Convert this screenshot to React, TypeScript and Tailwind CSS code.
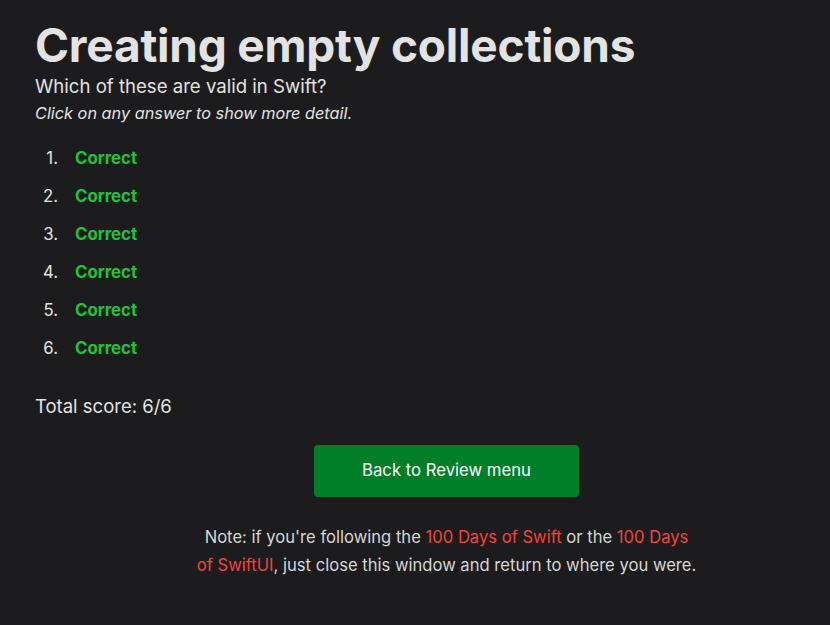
import React from "react";

export default function App() {
  const items = [1, 2, 3, 4, 5, 6];
  return (
    <div
      className="min-h-[625px] w-full bg-[#1c1c1e] text-[#e3e3e3] pl-[35px] pt-[18px]"
      style={{ fontFamily: "Inter, 'Noto Sans', sans-serif" }}
    >
      <h1 className="text-[46px] font-bold leading-[54px] tracking-[-0.2px] text-[#e3e3e3]">
        Creating empty collections
      </h1>
      <p className="text-[18.6px] leading-[28px] mt-[0px]">Which of these are valid in Swift?</p>
      <p className="text-[16.3px] italic leading-[26px]">Click on any answer to show more detail.</p>
      <ol className="mt-[19px] flex flex-col gap-[12px]">
        {items.map((n) => (
          <li key={n} className="flex text-[16.8px] leading-[26px]">
            <span className="w-[29px] text-right pr-[6px]">{n}.</span>
            <span className="ml-[11px] font-bold text-[#1fc33a]">Correct</span>
          </li>
        ))}
      </ol>
      <p className="mt-[31px] text-[18.5px] leading-[28px]">Total score: 6/6</p>
      <div className="pl-[28px] flex flex-col items-center">
        <button className="mt-[25px] w-[265px] h-[52px] rounded-[4px] bg-[#017f28] text-white text-[16.7px]">
          Back to Review menu
        </button>
        <p className="mt-[26px] w-[501px] text-center text-[16.6px] leading-[28px] text-[#d6d6d6]">
          Note: if you're following the{" "}
          <span className="text-[#f2433c]">100 Days of Swift</span> or the{" "}
          <span className="text-[#f2433c]">100 Days of SwiftUI</span>, just close this window and
          return to where you were.
        </p>
      </div>
    </div>
  );
}
